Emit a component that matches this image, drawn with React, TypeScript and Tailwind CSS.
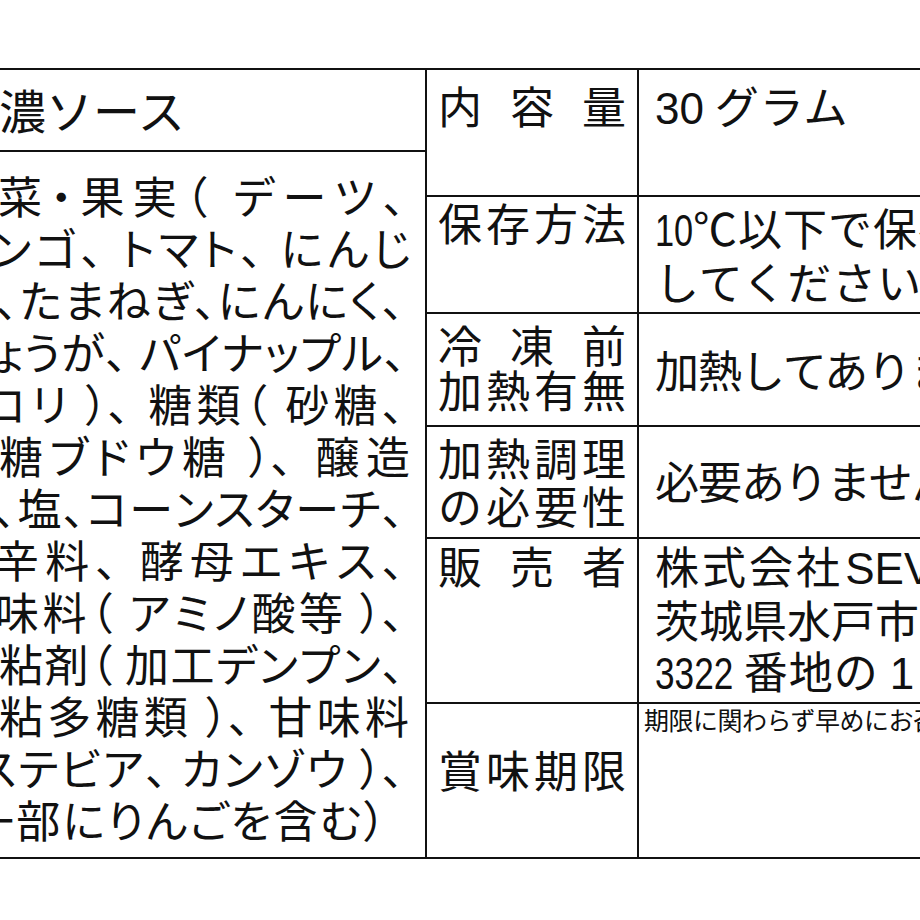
import React from 'react';

// 原材料の各行。表示は左端で切れているので、見えている部分だけを持つ
const ingredientLines: { text: string; cls: string }[] = [
  { text: '菜・果実（ デーツ、', cls: 'ml-[-2px] w-[407px]' },
  { text: 'ンゴ、 トマト、 にんじ', cls: 'ml-[-8px] w-[419px]' },
  { text: '、たまねぎ、にんにく、', cls: 'ml-[-4px] w-[408px]' },
  { text: 'ょうが、 パイナップル、', cls: 'ml-[-8px] w-[414px]' },
  { text: 'コリ ）、 糖類（ 砂糖、', cls: 'ml-[-15px] w-[419px]' },
  { text: '糖ブドウ糖 ）、 醸造', cls: 'ml-[-1px] w-[411px]' },
  { text: '、塩、コーンスターチ、', cls: 'ml-[-6px] w-[410px]' },
  { text: '辛料、 酵母エキス、', cls: 'ml-[-5px] w-[409px]' },
  { text: '味料（ アミノ酸等 ）、', cls: 'ml-[-5px] w-[409px]' },
  { text: '粘剤（ 加工デンプン、', cls: 'ml-[-1px] w-[405px]' },
  { text: '粘多糖類 ）、 甘味料', cls: 'ml-[-1px] w-[410px]' },
  { text: 'ステビア、 カンゾウ ）、', cls: 'ml-[-23px] w-[427px]' },
  { text: '一部にりんごを含む）', cls: 'ml-[-30px] w-[416px]' },
];

const tokens = (text: string) => text.match(/）、|./gu) || [];

const Spread: React.FC<{ text: string; className?: string }> = ({ text, className = '' }) => (
  <div className={`flex justify-between ${className}`}>
    {tokens(text).map((t, i) => (
      <span key={i}>{t}</span>
    ))}
  </div>
);

const LATIN = "font-['Liberation_Sans',sans-serif] tracking-normal";

const App: React.FC = () => {
  return (
    <div className="w-[920px] h-[920px] overflow-hidden bg-white pt-[68px] text-[#111] font-['Noto_Sans_CJK_JP',sans-serif]">
      <div className="flex w-[1300px] border-y-2 border-[#111]">
        {/* 名称・原材料 */}
        <div className="w-[427px] shrink-0 border-r-2 border-[#111] flex flex-col overflow-hidden">
          <div className="h-[82px] border-b-2 border-[#111] flex items-center pb-[4px] text-[47px] leading-none">
            <span className="ml-[-1px]">濃ソース</span>
          </div>
          <div className="pt-[17px] text-[44px] leading-[52px] whitespace-pre [font-feature-settings:'palt']">
            {ingredientLines.map((l, i) => (
              <Spread key={i} text={l.text} className={l.cls} />
            ))}
          </div>
        </div>

        {/* 項目と内容 */}
        <div className="flex-1 flex flex-col text-[44px]">
          <div className="h-[127px] flex border-b-2 border-[#111]">
            <div className="w-[212px] shrink-0 border-r-2 border-[#111] px-[11px] pt-[12px] leading-[46px]">
              <Spread text="内容量" />
            </div>
            <div className="flex-1 pl-[16px] pt-[9px] leading-[52px] tracking-[1px] whitespace-nowrap">
              <span className={LATIN}>30</span> グラム
            </div>
          </div>

          <div className="h-[117px] flex border-b-2 border-[#111]">
            <div className="w-[212px] shrink-0 border-r-2 border-[#111] px-[11px] pt-[2px] leading-[46px]">
              <Spread text="保存方法" />
            </div>
            <div className="flex-1 pl-[16px] pt-[5px] leading-[50px] tracking-[1px] whitespace-nowrap">
              <div>
                <span className="inline-block w-[38px]">
                  <span className={`inline-block origin-left scale-x-[0.78] ${LATIN}`}>10</span>
                </span>
                ℃以下で保存
              </div>
              <div>してください。</div>
            </div>
          </div>

          <div className="h-[113px] flex border-b-2 border-[#111]">
            <div className="w-[212px] shrink-0 border-r-2 border-[#111] px-[11px] pb-[6px] leading-[45px] flex flex-col justify-center">
              <Spread text="冷凍前" />
              <Spread text="加熱有無" />
            </div>
            <div className="flex-1 pl-[16px] pb-[2px] leading-[52px] tracking-[-1px] whitespace-nowrap flex items-center">
              加熱してありません。
            </div>
          </div>

          <div className="h-[112px] flex border-b-2 border-[#111]">
            <div className="w-[212px] shrink-0 border-r-2 border-[#111] px-[11px] pb-[3px] leading-[48px] flex flex-col justify-center">
              <Spread text="加熱調理" />
              <Spread text="の必要性" />
            </div>
            <div className="flex-1 pl-[16px] pb-[4px] leading-[52px] tracking-[-1px] whitespace-nowrap flex items-center">
              必要ありません。
            </div>
          </div>

          <div className="h-[165px] flex border-b-2 border-[#111]">
            <div className="w-[212px] shrink-0 border-r-2 border-[#111] px-[11px] pt-[3px] leading-[46px]">
              <Spread text="販売者" />
            </div>
            <div className="flex-1 pl-[16px] pt-[1px] leading-[51px] whitespace-nowrap">
              <div>
                <span className="tracking-[3px]">株式会社</span>
                <span className={`${LATIN} ml-[-10px]`}> SEV</span>
              </div>
              <div className="tracking-[0px]">茨城県水戸市</div>
              <div className="tracking-[1px]">
                <span className="inline-block w-[78px]">
                  <span className={`inline-block origin-left scale-x-[0.8] ${LATIN}`}>3322</span>
                </span>{' '}
                番地の <span className={LATIN}>1</span>
              </div>
            </div>
          </div>

          <div className="h-[153px] flex">
            <div className="w-[212px] shrink-0 border-r-2 border-[#111] px-[11px] pb-[23px] leading-[46px] flex flex-col justify-center">
              <Spread text="賞味期限" />
            </div>
            <div className="flex-1 pl-[5px] text-[25px] leading-[30px] tracking-[-0.5px] whitespace-nowrap">
              期限に関わらず早めにお召し上がりください。
            </div>
          </div>
        </div>
      </div>
    </div>
  );
};

export default App;
